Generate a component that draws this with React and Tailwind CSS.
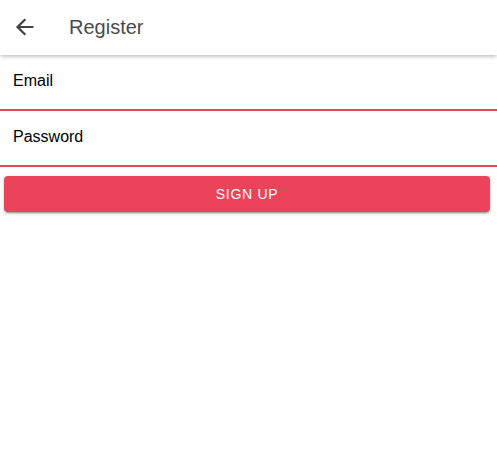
function BackIcon() {
  return (
    <svg viewBox="0 0 24 24" className="size-6" fill="none" stroke="currentColor" strokeWidth="2.2" aria-hidden="true">
      <path d="M20.5 12H4.8M12.3 4.2L4.5 12l7.8 7.8" />
    </svg>
  );
}

function Header({ title }) {
  return (
    <header className="flex h-[55px] items-center gap-8 pb-0.5 pl-[13px] text-[#424242] shadow-[0_2px_4px_-1px_rgba(0,0,0,0.2),0_1px_5px_0_rgba(0,0,0,0.14)]">
      <button type="button" aria-label="Back" className="flex size-6 items-center justify-center">
        <BackIcon />
      </button>
      <h1 className="text-xl text-[#4a4a4a]">{title}</h1>
    </header>
  );
}

function Field({ id, label, type }) {
  return (
    <div className="flex h-14 items-start border-b-2 border-[#ed4259] px-[13px] pt-3.5">
      <label htmlFor={id} className="text-base">
        {label}
      </label>
      <input id={id} type={type} className="h-6 min-w-0 flex-1 bg-transparent pl-4 outline-none" />
    </div>
  );
}

export default function App() {
  return (
    <div className="min-h-screen bg-white font-['Liberation_Sans',Arial,sans-serif] text-black">
      <Header title="Register" />
      <form onSubmit={(event) => event.preventDefault()}>
        <Field id="email" label="Email" type="email" />
        <Field id="password" label="Password" type="password" />
        <div className="pt-[9px] pr-[7px] pl-1">
          <button
            type="submit"
            className="h-9 w-full rounded bg-[#eb445a] text-sm tracking-wider text-white uppercase shadow-[0_3px_1px_-2px_rgba(0,0,0,0.2),0_2px_2px_0_rgba(0,0,0,0.14),0_1px_5px_0_rgba(0,0,0,0.12)]"
          >
            Sign Up
          </button>
        </div>
      </form>
    </div>
  );
}
